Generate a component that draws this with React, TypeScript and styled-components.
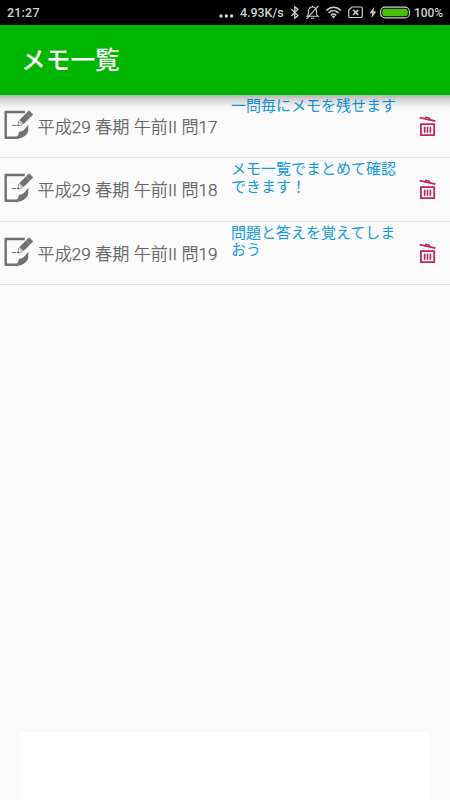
import React from 'react';
import styled, { createGlobalStyle } from 'styled-components';

const GlobalStyle = createGlobalStyle`
  * { box-sizing: border-box; }
  body { margin: 0; background: #fafafa; }
`;

const Screen = styled.div`
  width: 450px;
  height: 800px;
  overflow: hidden;
  display: flex;
  flex-direction: column;
  background: #fafafa;
  font-family: Roboto, 'Noto Sans CJK JP', sans-serif;
`;

const StatusBar = styled.div`
  flex: none;
  height: 25px;
  padding: 0 7px;
  display: flex;
  align-items: center;
  background: #000;
  color: #d2d2d2;
  font-size: 12.5px;
  font-weight: 500;
`;

const Clock = styled.span`
  flex: 1;
  letter-spacing: 0.2px;
`;

const Speed = styled.span`
  width: 44px;
  margin: 0 7px 0 6px;
  white-space: nowrap;
  font-size: 12.4px;
`;

const Percent = styled.span`
  width: 29px;
  margin-left: 4px;
  white-space: nowrap;
  font-size: 12px;
  letter-spacing: -0.1px;
`;

const StatusIcon = styled.svg<{ $gap?: number }>`
  flex: none;
  display: block;
  margin-right: ${({ $gap = 0 }) => $gap}px;
`;

const AppBar = styled.header`
  flex: none;
  position: relative;
  height: 70px;
  padding-left: 21px;
  display: flex;
  align-items: center;
  background: #00b600;
  color: #fff;
`;

const BarShadow = styled.div`
  position: absolute;
  left: 0;
  right: 0;
  top: 100%;
  height: 16px;
  pointer-events: none;
  background: linear-gradient(rgba(0, 0, 0, 0.28), rgba(0, 0, 0, 0.13) 35%, rgba(0, 0, 0, 0.04) 70%, transparent);
`;

const Title = styled.h1`
  margin: 0;
  padding-top: 1px;
  font-size: 24.7px;
  line-height: 32px;
  font-weight: 500;
`;

const MemoList = styled.ul`
  flex: 1;
  margin: 0;
  padding: 0;
  list-style: none;
`;

const MemoRow = styled.li`
  height: 63.33px;
  display: flex;
  align-items: flex-start;
  border-bottom: 1px solid #e0e0e0;
`;

const NoteIcon = styled.svg`
  flex: none;
  margin: 15px 4px 0 3px;
`;

const Question = styled.div`
  width: 194px;
  padding: 19px 0 0 0.5px;
  font-size: 17.1px;
  line-height: 26px;
  font-weight: 300;
  letter-spacing: 0.06px;
  -webkit-text-stroke: 0.25px #5c5c5c;
  color: #5c5c5c;
  white-space: nowrap;
`;

const MemoText = styled.div`
  width: 166px;
  padding-top: 3px;
  font-size: 15px;
  line-height: 17.5px;
  color: #109be0;
  white-space: pre;
`;

const TrashButton = styled.button`
  margin: 20px 0 0 19px;
  padding: 0;
  border: 0;
  background: none;
  line-height: 0;
`;

const AdPanel = styled.div`
  flex: none;
  height: 68px;
  margin: 0 21px 0 20px;
  background: #fff;
`;

const memos = [
  { question: '平成29 春期 午前II 問17', text: '一問毎にメモを残せます' },
  { question: '平成29 春期 午前II 問18', text: 'メモ一覧でまとめて確認\nできます！' },
  { question: '平成29 春期 午前II 問19', text: '問題と答えを覚えてしま\nおう' },
];

const EditNote = () => (
  <NoteIcon width="30" height="30" viewBox="0 0 30 30">
    <path d="M21.8 2H2.7V27.7H14L24 20" fill="none" stroke="#707070" strokeWidth="2.4" />
    <path d="M13.8 28.8L16.2 21.7C19 22 22.3 19.5 25.3 14.5V20C25.3 24 20 28.8 13.8 28.8Z" fill="#707070" />
    <path d="M26.1 .8L29.8 4.5L27.3 7L23.6 3.3Z M23.1 3.8L26.8 7.5L20.4 13.8L16.7 10.1Z" fill="#707070" stroke="#707070" strokeWidth=".9" />
    <path d="M15.8 11.3L19.3 14.8L14.6 16Z" fill="#fafafa" stroke="#707070" strokeWidth=".7" />
    <path d="M14.7 13.8V16H17Z" fill="#707070" />
    <path d="M9 15.5H13.5" stroke="#707070" strokeWidth="1" />
  </NoteIcon>
);

const Trash = () => (
  <svg width="20" height="22" viewBox="0 0 20 22">
    <g fill="none" stroke="#c0265f">
      <path d="M4.9 9.1H18.2V20.1H4.9Z" strokeWidth="1.8" />
      <path d="M8.7 11.8V17.8M11.5 11.8V17.8M14.4 11.8V17.8" strokeWidth="1.6" />
      <path d="M3.7 2.7L19.4 6.1" strokeWidth="1.8" />
      <path d="M9 3.5L10 2.3L13.4 3L14 4.5" strokeWidth="1.4" />
    </g>
  </svg>
);

export default function App() {
  return (
    <Screen>
      <GlobalStyle />
      <StatusBar>
        <Clock>21:27</Clock>
        <StatusIcon width="15" height="25" viewBox="0 0 15 25" fill="#d2d2d2">
          <circle cx="2" cy="16" r="1.7" />
          <circle cx="7.3" cy="16" r="1.7" />
          <circle cx="12.6" cy="16" r="1.7" />
        </StatusIcon>
        <Speed>4.93K/s</Speed>
        <StatusIcon width="10" height="25" viewBox="0 0 10 25" $gap={5} fill="none" stroke="#d2d2d2" strokeWidth="1.3">
          <path d="M.3 9.2L7 15.6L3.8 18.2V6.8L7 9.4L.3 15.8" />
        </StatusIcon>
        <StatusIcon width="15" height="25" viewBox="0 0 15 25" $gap={5} fill="none" stroke="#d2d2d2" strokeWidth="1.1">
          <path d="M1 16.3C3 14.8 2.3 12.5 2.5 11C2.8 8.5 4.2 7 6.5 7C8.8 7 10.2 8.5 10.5 11C10.7 12.5 10 14.8 12 16.3Z" />
          <path d="M12.5 5.8L.5 18.8M5 18.2H8M6.5 7V5.8" />
        </StatusIcon>
        <StatusIcon width="16" height="25" viewBox="0 0 16 25" $gap={6} fill="none" stroke="#d2d2d2" strokeWidth="1.6">
          <path d="M.3 10.5C4.5 6.2 10.5 6.2 14.7 10.5M2.5 13C5.5 10 9.5 10 12.5 13M4.8 15.3C6.5 13.8 8.5 13.8 10.2 15.3" />
          <path d="M5.8 16.5Q7.5 15.1 9.2 16.5L7.5 18.4Z" fill="#d2d2d2" stroke="none" />
        </StatusIcon>
        <StatusIcon width="15" height="25" viewBox="0 0 15 25" $gap={6} fill="none" stroke="#d2d2d2" strokeWidth="1.2">
          <path d="M4 7H13Q14.3 7 14.3 8.3V16.2Q14.3 17.5 13 17.5H2Q.7 17.5 .7 16.2V10.2Z" />
          <path d="M5 9.7L10.3 15M10.3 9.7L5 15" strokeWidth="1.6" />
        </StatusIcon>
        <StatusIcon width="8" height="25" viewBox="0 0 8 25" $gap={3} fill="#d2d2d2">
          <path d="M5.2 7L.5 13.3H3.3L2.3 18.3L7.3 11.6H4.4Z" />
        </StatusIcon>
        <StatusIcon width="30" height="25" viewBox="0 0 30 25">
          <rect x=".6" y="7.1" width="28.8" height="10.8" rx="4.5" fill="none" stroke="#d2d2d2" strokeWidth="1.1" />
          <rect x="2.2" y="8.7" width="25.6" height="7.6" rx="3" fill="#48bf08" />
        </StatusIcon>
        <Percent>100%</Percent>
      </StatusBar>
      <AppBar>
        <Title>メモ一覧</Title>
        <BarShadow />
      </AppBar>
      <MemoList>
        {memos.map((memo) => (
          <MemoRow key={memo.question}>
            <EditNote />
            <Question>{memo.question}</Question>
            <MemoText>{memo.text}</MemoText>
            <TrashButton aria-label="削除">
              <Trash />
            </TrashButton>
          </MemoRow>
        ))}
      </MemoList>
      <AdPanel />
    </Screen>
  );
}
